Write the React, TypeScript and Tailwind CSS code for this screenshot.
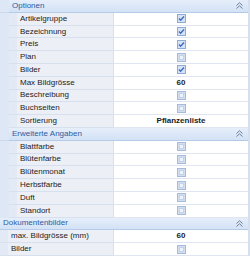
import React from "react";

type Value = boolean | string;

type Section = {
  title: string;
  nested: boolean;
  rows: [string, Value][];
};

const sections: Section[] = [
  {
    title: "Optionen",
    nested: true,
    rows: [
      ["Artikelgruppe", true],
      ["Bezeichnung", true],
      ["Preis", true],
      ["Plan", false],
      ["Bilder", true],
      ["Max Bildgrösse", "60"],
      ["Beschreibung", false],
      ["Buchseiten", false],
      ["Sortierung", "Pflanzenliste"],
    ],
  },
  {
    title: "Erweiterte Angaben",
    nested: true,
    rows: [
      ["Blattfarbe", false],
      ["Blütenfarbe", false],
      ["Blütenmonat", false],
      ["Herbstfarbe", false],
      ["Duft", false],
      ["Standort", false],
    ],
  },
  {
    title: "Dokumentenbilder",
    nested: false,
    rows: [
      ["max. Bildgrösse (mm)", "60"],
      ["Bilder", false],
    ],
  },
];

function CheckBox({ checked }: { checked: boolean }) {
  if (checked) {
    return (
      <svg width="9" height="9" viewBox="0 0 9 9">
        <rect x="0.5" y="0.5" width="8" height="8" fill="#d6e3f6" stroke="#8eaad6" />
        <path d="M2 4.6 L3.6 6.2 L7 2.6" fill="none" stroke="#3a6cc0" strokeWidth="1.4" />
      </svg>
    );
  }
  return (
    <svg width="9" height="9" viewBox="0 0 9 9">
      <rect x="0.5" y="0.5" width="8" height="8" fill="#d3def0" stroke="#a6bbdc" />
      <rect x="2.5" y="2.5" width="4" height="4" fill="#eef3fb" stroke="#c3d2ea" />
    </svg>
  );
}

function Collapse() {
  return (
    <svg width="7" height="7" viewBox="0 0 7 7" className="mr-[5px]">
      <path d="M0.5 3.5 L3.5 0.8 L6.5 3.5 M0.5 6.5 L3.5 3.8 L6.5 6.5" fill="none" stroke="#6b7e9c" strokeWidth="1" />
    </svg>
  );
}

export default function App() {
  return (
    <div className="w-[250px] h-[256px] flex flex-col bg-white border-r-2 border-[#d5dfee] font-['Liberation_Sans',Arial,sans-serif] text-[8px] text-[#1c1c1c] overflow-hidden">
      {sections.map((s) => (
        <React.Fragment key={s.title}>
          <div className="flex-1 flex min-h-0">
            {s.nested && <div className="w-[9px] bg-[#dde7f5] border-b border-[#c9d8ee]" />}
            <div className="flex-1 flex items-center justify-between bg-gradient-to-b from-[#e6eefa] to-[#d3e2f6] border-b border-[#b6cbe8] pl-[3px]">
              <span className="text-[#2e5c9e]">{s.title}</span>
              <Collapse />
            </div>
          </div>
          {s.rows.map(([label, value]) => (
            <div key={s.title + label} className="flex-1 flex min-h-0">
              <div className="w-[114px] flex">
                {s.nested && <div className="w-[9px] bg-[#dde7f5]" />}
                <div className="w-[8px] bg-[#e3eaf6] border-b border-[#d7e0ee]" />
                <div className="flex-1 flex items-center bg-[#eceff6] border-b border-r border-[#d7e0ee] pl-[3px]">
                  {label}
                </div>
              </div>
              <div className="flex-1 flex items-center justify-center border-b border-[#e0e6f0]">
                {typeof value === "boolean" ? (
                  <CheckBox checked={value} />
                ) : (
                  <span className="font-bold">{value}</span>
                )}
              </div>
            </div>
          ))}
        </React.Fragment>
      ))}
    </div>
  );
}
